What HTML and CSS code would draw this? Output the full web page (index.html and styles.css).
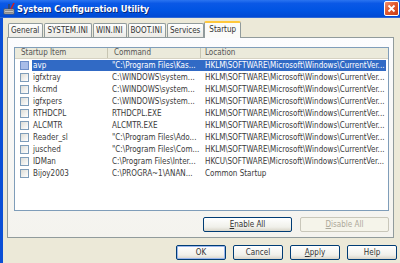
FILE: index.html
```html
<!DOCTYPE html>
<html lang="en">
<head>
  <meta charset="UTF-8">
  <title>System Configuration Utility</title>
  <link rel="stylesheet" href="styles.css">
</head>
<body>
  <div class="window">

    <!-- Title bar -->
    <div class="titlebar">
      <svg class="app-icon" width="13" height="13" viewBox="0 0 13 13">
        <rect x="1" y="7" width="10" height="5" fill="#c8c8c8" stroke="#5a5a5a" stroke-width="0.8"/>
        <rect x="2" y="8" width="8" height="1" fill="#8a8a8a"/>
        <rect x="2" y="10" width="8" height="1" fill="#8a8a8a"/>
        <path d="M6 7 L6 2" stroke="#404040" stroke-width="1.2"/>
        <path d="M8 7 L11 1" stroke="#d02020" stroke-width="1.6"/>
        <path d="M3 6 L4 3" stroke="#2050d0" stroke-width="1.2"/>
      </svg>
      <span class="title">System Configuration Utility</span>
      <div class="close-btn">
        <svg width="13" height="13" viewBox="0 0 13 13">
          <path d="M3.5 3.5 L9.5 9.5 M9.5 3.5 L3.5 9.5" stroke="#fff" stroke-width="1.8"/>
        </svg>
      </div>
    </div>

    <!-- Tabs -->
    <div class="tabs">
      <div class="tab">General</div>
      <div class="tab">SYSTEM.INI</div>
      <div class="tab">WIN.INI</div>
      <div class="tab">BOOT.INI</div>
      <div class="tab">Services</div>
      <div class="tab active">Startup</div>
    </div>

    <!-- Tab page -->
    <div class="panel">
      <div class="list">
        <div class="list-header">
          <div class="col col-name">Startup Item</div>
          <div class="col col-cmd">Command</div>
          <div class="col col-loc">Location</div>
        </div>
        <div class="list-body" id="listBody"></div>
      </div>

      <div class="panel-buttons">
        <button class="btn wide"><u>E</u>nable All</button>
        <button class="btn wide" disabled><u>D</u>isable All</button>
      </div>
    </div>

    <!-- Dialog buttons -->
    <div class="dialog-buttons">
      <button class="btn default">OK</button>
      <button class="btn">Cancel</button>
      <button class="btn"><u>A</u>pply</button>
      <button class="btn">Help</button>
    </div>
  </div>

  <script>
    const HKLM = 'HKLM\\SOFTWARE\\Microsoft\\Windows\\CurrentVer...';
    const items = [
      { name: 'avp', cmd: '"C:\\Program Files\\Kas...', loc: HKLM, selected: true },
      { name: 'igfxtray', cmd: 'C:\\WINDOWS\\system...', loc: HKLM },
      { name: 'hkcmd', cmd: 'C:\\WINDOWS\\system...', loc: HKLM },
      { name: 'igfxpers', cmd: 'C:\\WINDOWS\\system...', loc: HKLM },
      { name: 'RTHDCPL', cmd: 'RTHDCPL.EXE', loc: HKLM },
      { name: 'ALCMTR', cmd: 'ALCMTR.EXE', loc: HKLM },
      { name: 'Reader_sl', cmd: '"C:\\Program Files\\Ado...', loc: HKLM },
      { name: 'jusched', cmd: '"C:\\Program Files\\Com...', loc: HKLM },
      { name: 'IDMan', cmd: 'C:\\Program Files\\Inter...', loc: 'HKCU\\SOFTWARE\\Microsoft\\Windows\\CurrentVer...' },
      { name: 'Bijoy2003', cmd: 'C:\\PROGRA~1\\ANAN...', loc: 'Common Startup' }
    ];

    const listBody = document.getElementById('listBody');
    items.forEach(item => {
      const row = document.createElement('div');
      row.className = 'row' + (item.selected ? ' selected' : '');
      row.innerHTML = `
        <div class="check-cell"><span class="checkbox"></span></div>
        <div class="cells">
          <div class="cell cell-name"></div>
          <div class="cell cell-cmd"></div>
          <div class="cell cell-loc"></div>
        </div>
      `;
      row.querySelector('.cell-name').textContent = item.name;
      row.querySelector('.cell-cmd').textContent = item.cmd;
      row.querySelector('.cell-loc').textContent = item.loc;
      listBody.appendChild(row);
    });
  </script>
</body>
</html>
```

FILE: styles.css
```css
/* Page */
body {
  margin: 0;
  width: 400px;
  height: 263px;
  overflow: hidden;
  font-family: "DejaVu Sans Condensed", "DejaVu Sans", sans-serif;
  font-stretch: condensed;
  font-size: 8px;
  color: #3a3a3a;
}

.window {
  height: 263px;
  background-color: #ece9d8;
  border-left: 3px solid #0b4fd6;
  box-sizing: border-box;
}

/* Title bar */
.titlebar {
  height: 17px;
  margin-left: -3px;
  display: flex;
  align-items: center;
  background: linear-gradient(#2a74f0 0%, #0a58e6 20%, #0054e3 60%, #0049d4 100%);
  border-bottom: 1px solid #2c68d8;
}

.app-icon {
  margin-left: 3px;
  margin-right: 1px;
}

.title {
  flex-grow: 1;
  color: #fff;
  font-weight: bold;
  font-size: 9.2px;
  text-shadow: 1px 1px 0 #0a2a7a;
}

.close-btn {
  width: 13px;
  height: 13px;
  margin-right: 1px;
  border: 1px solid #fff;
  border-radius: 2px;
  background: linear-gradient(135deg, #f09070 0%, #e05a30 45%, #c83a14 100%);
  display: flex;
}

/* Tabs */
.tabs {
  display: flex;
  align-items: flex-end;
  height: 15px;
  margin-top: 4px;
  margin-left: 5px;
  position: relative;
  z-index: 1;
}

.tab {
  height: 13px;
  line-height: 13px;
  padding: 0 3px 0 2px;
  margin-right: 1px;
  border: 1px solid #919b9c;
  border-bottom: none;
  border-radius: 2px 2px 0 0;
  background: linear-gradient(#fefefe, #ecebe6);
  color: #333;
}

.tab.active {
  height: 15px;
  line-height: 14px;
  padding: 0 4px;
  margin-left: -1px;
  background: #fbfbf9;
  border-top: 2px solid #ffc83c;
  margin-bottom: -1px;
}

/* Tab page */
.panel {
  margin-left: 4px;
  width: 387px;
  height: 201px;
  box-sizing: border-box;
  border: 1px solid #919b9c;
  background: linear-gradient(#fcfcfe, #f4f3ee);
  padding: 9px 0 0 6px;
}

/* List view */
.list {
  width: 375px;
  height: 164px;
  box-sizing: border-box;
  border: 1px solid #7f9db9;
  background: #fff;
  overflow: hidden;
}

.list-header {
  display: flex;
  height: 10px;
  background: #ebeadb;
  border-bottom: 1px solid #d6d2c2;
  line-height: 10px;
  color: #555;
}

.col {
  box-sizing: border-box;
  padding-left: 6px;
  border-right: 1px solid #c7c5b2;
}

.col-name { width: 93px; }
.col-cmd { width: 93px; }
.col-loc { flex-grow: 1; border-right: none; padding-left: 4px; }

.row {
  display: flex;
  height: 12px;
  line-height: 11px;
}

.check-cell {
  width: 17px;
  flex-shrink: 0;
  display: flex;
  align-items: center;
}

.checkbox {
  width: 7px;
  height: 7px;
  margin-left: 5px;
  border: 1px solid #7f9db9;
  background: linear-gradient(135deg, #dcdcd6, #fff);
}

.row.selected .checkbox {
  background: #a9bde8;
  border-color: #6f8fc9;
}

.cells {
  display: flex;
  flex-grow: 1;
  margin: 1px 2px 0 0;
  height: 11px;
}

.row.selected .cells {
  background: #316ac5;
  color: #fff;
}

.cell {
  white-space: nowrap;
  overflow: hidden;
  box-sizing: border-box;
}

.cell-name { width: 76px; padding-left: 1px; }
.cell-cmd { width: 93px; padding-left: 4px; }
.cell-loc { flex-grow: 1; padding-left: 4px; }

/* Buttons */
.btn {
  width: 50px;
  height: 15px;
  padding: 0;
  font-family: inherit;
  font-stretch: condensed;
  font-size: 8px;
  color: #333;
  border: 1px solid #003c74;
  border-radius: 2px;
  background: linear-gradient(#ffffff, #f0f0ea 70%, #d8d4c8);
}

.btn.wide {
  width: 89px;
}

.btn:disabled {
  color: #aca899;
  border-color: #c9c7ba;
  background: #f5f4ea;
}

.btn.default {
  box-shadow: inset 0 0 0 1px #9bb7ec;
}

.panel-buttons {
  display: flex;
  justify-content: flex-end;
  gap: 8px;
  width: 375px;
  margin-top: 6px;
}

.dialog-buttons {
  display: flex;
  justify-content: flex-end;
  gap: 7px;
  margin-top: 7px;
  padding-right: 3px;
}
```
